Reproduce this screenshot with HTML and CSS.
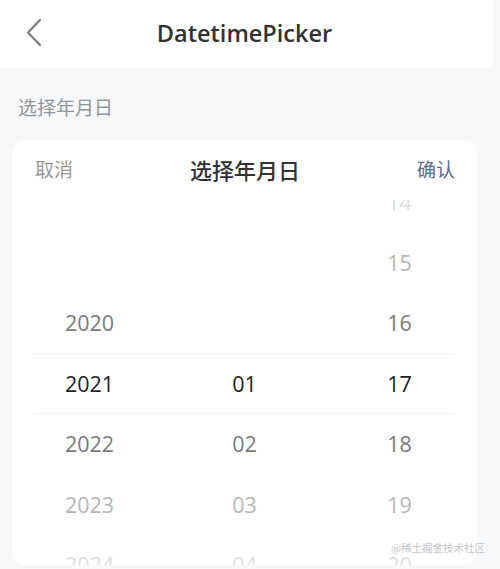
FILE: index.html
```html
<!DOCTYPE html>
<html lang="zh-CN">
<head>
<meta charset="utf-8">
<title>DatetimePicker</title>
<link rel="stylesheet" href="styles.css">
</head>
<body>
<header class="nav">
  <span class="nav-left">
    <svg class="back" width="18" height="30" viewBox="0 0 18 30" aria-hidden="true">
      <path d="M15 2 L3 14.5 L15 27" fill="none" stroke="#7d7e80" stroke-width="2.2" stroke-linecap="round" stroke-linejoin="round"/>
    </svg>
  </span>
  <h1 class="nav-title">DatetimePicker</h1>
  <span class="nav-right"></span>
</header>

<main class="demo">
  <h2 class="block-title">选择年月日</h2>
  <section class="picker">
    <div class="toolbar">
      <span class="btn cancel">取消</span>
      <span class="picker-title">选择年月日</span>
      <span class="btn confirm">确认</span>
    </div>
    <div class="columns">
      <ul class="column">
        <li class="item"></li>
        <li class="item"></li>
        <li class="item d1">2020</li>
        <li class="item d0">2021</li>
        <li class="item d1">2022</li>
        <li class="item d2">2023</li>
        <li class="item d3">2024</li>
      </ul>
      <ul class="column">
        <li class="item"></li>
        <li class="item"></li>
        <li class="item"></li>
        <li class="item d0">01</li>
        <li class="item d1">02</li>
        <li class="item d2">03</li>
        <li class="item d3">04</li>
      </ul>
      <ul class="column">
        <li class="item d3">14</li>
        <li class="item d2">15</li>
        <li class="item d1">16</li>
        <li class="item d0">17</li>
        <li class="item d1">18</li>
        <li class="item d2">19</li>
        <li class="item d3">20</li>
      </ul>
      <div class="frame"></div>
    </div>
  </section>
  <span class="watermark">@稀土掘金技术社区</span>
</main>
</body>
</html>
```

FILE: styles.css
```css
* {
  box-sizing: border-box;
}

html, body {
  margin: 0;
  padding: 0;
}

body {
  background: #f7f8fa;
  font-family: "Open Sans", "Noto Sans CJK SC", sans-serif;
  color: #323233;
  overflow: hidden;
}

.nav {
  width: 493px;
  height: 68px;
  background: #ffffff;
  display: grid;
  grid-template-columns: 1fr auto 1fr;
  align-items: center;
}

.nav-left {
  display: flex;
  align-items: center;
  padding-left: 25px;
  padding-bottom: 2px;
}

.back {
  display: block;
}

.nav-title {
  margin: 0;
  font-size: 23.5px;
  font-weight: 600;
  color: #323233;
  line-height: 30px;
  padding-bottom: 3px;
  padding-right: 4px;
}

.demo {
  position: relative;
  padding: 0;
}

.block-title {
  margin: 0;
  padding: 28px 18px 22px;
  font-size: 19px;
  line-height: 22px;
  font-weight: 400;
  color: #8f979c;
  font-family: "Noto Sans CJK SC", sans-serif;
}

.picker {
  margin-left: 12px;
  width: 465px;
  background: #ffffff;
  border-radius: 12px;
  overflow: hidden;
}

.toolbar {
  height: 60px;
  display: flex;
  align-items: center;
  justify-content: space-between;
  padding: 0 22px 2px 23px;
  font-family: "Noto Sans CJK SC", sans-serif;
}

.btn {
  font-size: 19px;
  line-height: 24px;
}

.cancel {
  color: #969799;
}

.confirm {
  color: #576b95;
}

.picker-title {
  font-size: 22px;
  font-weight: 500;
  color: #323233;
  line-height: 26px;
}

.columns {
  position: relative;
  height: 365px;
  display: grid;
  grid-template-columns: 1fr 1fr 1fr;
  overflow: hidden;
}

.column {
  list-style: none;
  margin: -28px 0 0;
  padding: 0;
}

.item {
  height: 60.5px;
  line-height: 60.5px;
  text-align: center;
  font-size: 21.5px;
  color: #323233;
}

.d0 {
  color: #1e1e1e;
}

.d1 {
  color: #7a7a7a;
}

.d2 {
  color: #b6b6b6;
}

.d3 {
  color: #dedede;
}

.frame {
  position: absolute;
  left: 22px;
  right: 22px;
  top: 153px;
  height: 61px;
  border-top: 1px solid #eeeff2;
  border-bottom: 1px solid #eeeff2;
  pointer-events: none;
}

.watermark {
  position: absolute;
  left: 391px;
  top: 473px;
  font-family: "Noto Sans CJK SC", sans-serif;
  font-size: 10.5px;
  line-height: 14px;
  color: #c4c4c4;
  white-space: nowrap;
  text-shadow: 0 0 2px #ffffff;
}
```
